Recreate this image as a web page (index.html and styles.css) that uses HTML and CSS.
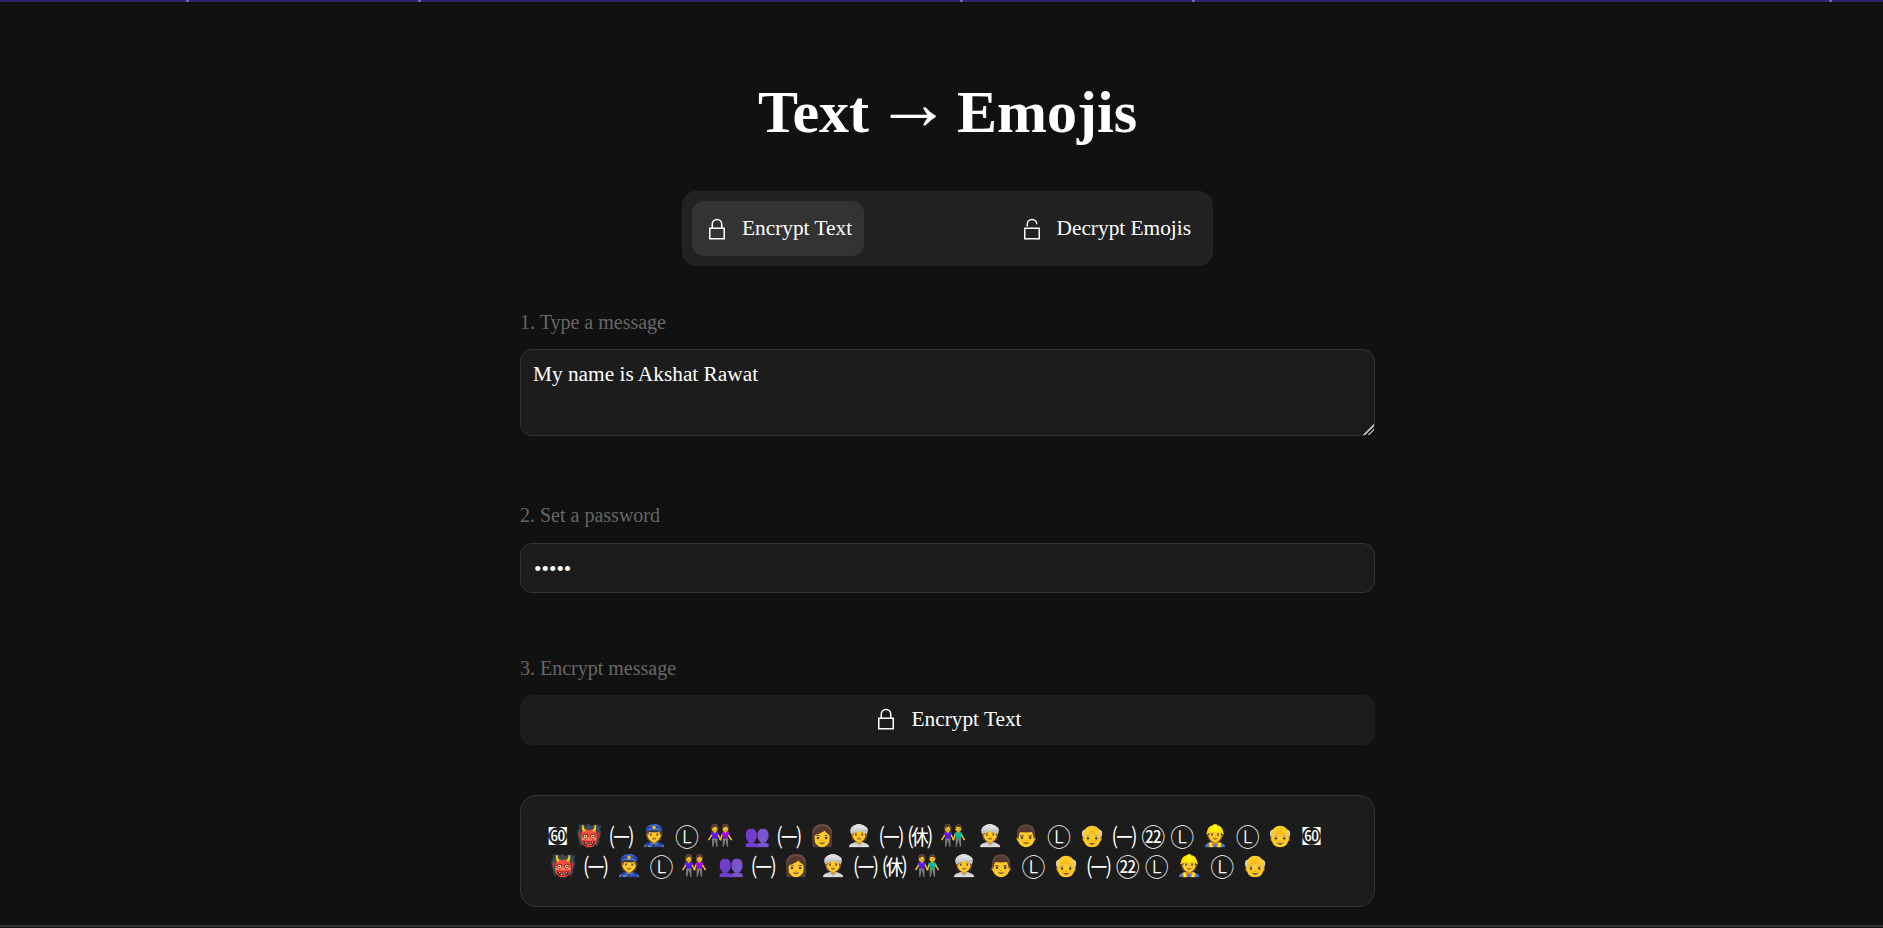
FILE: index.html
```html
<!DOCTYPE html>
<html lang="en">
<head>
<meta charset="utf-8">
<title>Text to Emojis</title>
<link rel="stylesheet" href="styles.css">
</head>
<body>
<div class="topline"></div>
<main class="page">
  <h1 class="title">Text <span class="arrow">→</span> Emojis</h1>
  <div class="tabs">
    <button class="tab tab-active">
      <svg class="lock" viewBox="0 0 24 24"><path d="M5.75 11.25h14.5v10.5H5.75z"/><path d="M8.25 11.25V7.25a4.75 4.75 0 0 1 9.5 0v4"/></svg>
      Encrypt Text
    </button>
    <button class="tab">
      <svg class="lock" viewBox="0 0 24 24"><path d="M5.75 11.25h14.5v10.5H5.75z"/><path d="M8.25 9.5V7.25a4.75 4.75 0 0 1 9.5 0"/></svg>
      Decrypt Emojis
    </button>
  </div>
  <label class="label label-first">1. Type a message</label>
  <textarea class="field area">My name is Akshat Rawat</textarea>
  <label class="label label-second">2. Set a password</label>
  <input class="field pass" type="password" value="abcde">
  <label class="label label-third">3. Encrypt message</label>
  <button class="action">
    <svg class="lock" viewBox="0 0 24 24"><path d="M5.75 11.25h14.5v10.5H5.75z"/><path d="M8.25 11.25V7.25a4.75 4.75 0 0 1 9.5 0v4"/></svg>
    Encrypt Text
  </button>
  <div class="output"><span class="sq">㉍</span><span class="em">👹</span><span class="cj">㈠</span><span class="em">👮</span><span class="cj ci">Ⓛ</span><span class="em">👭</span><span class="em busts">👥</span><span class="cj">㈠</span><span class="em">👩</span><span class="em">👳</span><span class="cj">㈠</span><span class="cj">㉁</span><span class="em">👫</span><span class="em">👳</span><span class="em">👨</span><span class="cj ci">Ⓛ</span><span class="em">👴</span><span class="cj">㈠</span><span class="cj">㉒</span><span class="cj ci">Ⓛ</span><span class="em">👷</span><span class="cj ci">Ⓛ</span><span class="em">👴</span><span class="sq">㉍</span><span class="em">👹</span><span class="cj">㈠</span><span class="em">👮</span><span class="cj ci">Ⓛ</span><span class="em">👭</span><span class="em busts">👥</span><span class="cj">㈠</span><span class="em">👩</span><span class="em">👳</span><span class="cj">㈠</span><span class="cj">㉁</span><span class="em">👫</span><span class="em">👳</span><span class="em">👨</span><span class="cj ci">Ⓛ</span><span class="em">👴</span><span class="cj">㈠</span><span class="cj">㉒</span><span class="cj ci">Ⓛ</span><span class="em">👷</span><span class="cj ci">Ⓛ</span><span class="em">👴</span></div>
</main>
<div class="bottomline"></div>
</body>
</html>
```
FILE: styles.css
```css
* { box-sizing: border-box; }
html, body { margin: 0; height: 928px; overflow: hidden; }
body { display: flex; flex-direction: column; background: #111; color: #fff; font-family: "Liberation Serif", "Noto Sans CJK JP", serif; }
.topline {
  flex: none;
  height: 2px;
  background:
    linear-gradient(#6f66a8, #6f66a8) 186px 0 / 3px 100% no-repeat,
    linear-gradient(#6f66a8, #6f66a8) 418px 0 / 3px 100% no-repeat,
    linear-gradient(#6f66a8, #6f66a8) 960px 0 / 3px 100% no-repeat,
    linear-gradient(#6f66a8, #6f66a8) 1192px 0 / 3px 100% no-repeat,
    linear-gradient(#6f66a8, #6f66a8) 1829px 0 / 3px 100% no-repeat,
    #2e2268;
}
.bottomline { flex: none; height: 2px; margin-bottom: 1px; background: #333; }
.page { flex: 1; width: 855px; margin-left: 520px; display: flex; flex-direction: column; }
.title { margin: 76px 0 0; font-size: 60px; line-height: 69px; font-weight: 700; text-align: center; }
.arrow { font-size: 76px; line-height: 0; margin: 0 -9px; vertical-align: 3px; }
.tabs { align-self: center; width: 531px; height: 75px; margin-top: 44px; padding: 10px; display: flex; justify-content: space-between; background: #222; border-radius: 14px; }
.tab { height: 55px; padding: 0 12px; display: flex; align-items: center; gap: 14px; background: transparent; border: 0; border-radius: 12px; color: #fff; font: 21.33px "Liberation Serif", serif; }
.tab-active { background: #333; }
.lock { flex: none; width: 24px; height: 24px; fill: none; stroke: #fff; stroke-width: 1.5; }
.label { font-size: 20px; line-height: 22px; color: #666; }
.label-first { margin-top: 45px; }
.label-second { margin-top: 68px; }
.label-third { margin-top: 64px; }
.field { display: block; width: 100%; margin-top: 16px; background: #1c1c1c; border: 1px solid #333; border-radius: 12px; color: #fff; font: 21.33px "Liberation Serif", serif; padding: 12px; outline: 0; color-scheme: dark; }
.label-second + .field { margin-top: 17px; }
.area { height: 87px; }
.area::-webkit-resizer {
  background: linear-gradient(135deg, transparent 58%, #111 58%, #111 62%, #aaa 62%, #aaa 72%, #111 72%, #111 78%, #aaa 78%, #aaa 86%, transparent 86%);
}
.pass { height: 50px; padding: 13px 12px 11px 13px; }
.action { flex: none; margin-top: 16px; height: 50px; padding: 0 0 2px; display: flex; justify-content: center; align-items: center; gap: 14px; background: #1c1c1c; border: 0; border-radius: 12px; color: #fff; font: 21.33px "Liberation Serif", serif; }
.output { margin-top: 50px; height: 112px; padding: 25px 24px; background: #1c1c1c; border: 1px solid #333; border-radius: 16px; line-height: 30px; }
.em, .cj, .sq { display: inline-block; vertical-align: top; height: 30px; line-height: 30px; text-align: center; overflow: visible; }
.em { width: 36.7px; font-size: 21px; }
.busts { filter: hue-rotate(50deg) saturate(1.3) brightness(.8); }
.cj { width: 28.8px; font-size: 24px; font-family: "Noto Sans CJK JP", sans-serif; }
.ci { font-weight: 200; }
.sq { width: 25.5px; font-size: 20px; font-family: "Noto Sans CJK JP", sans-serif; }
```
